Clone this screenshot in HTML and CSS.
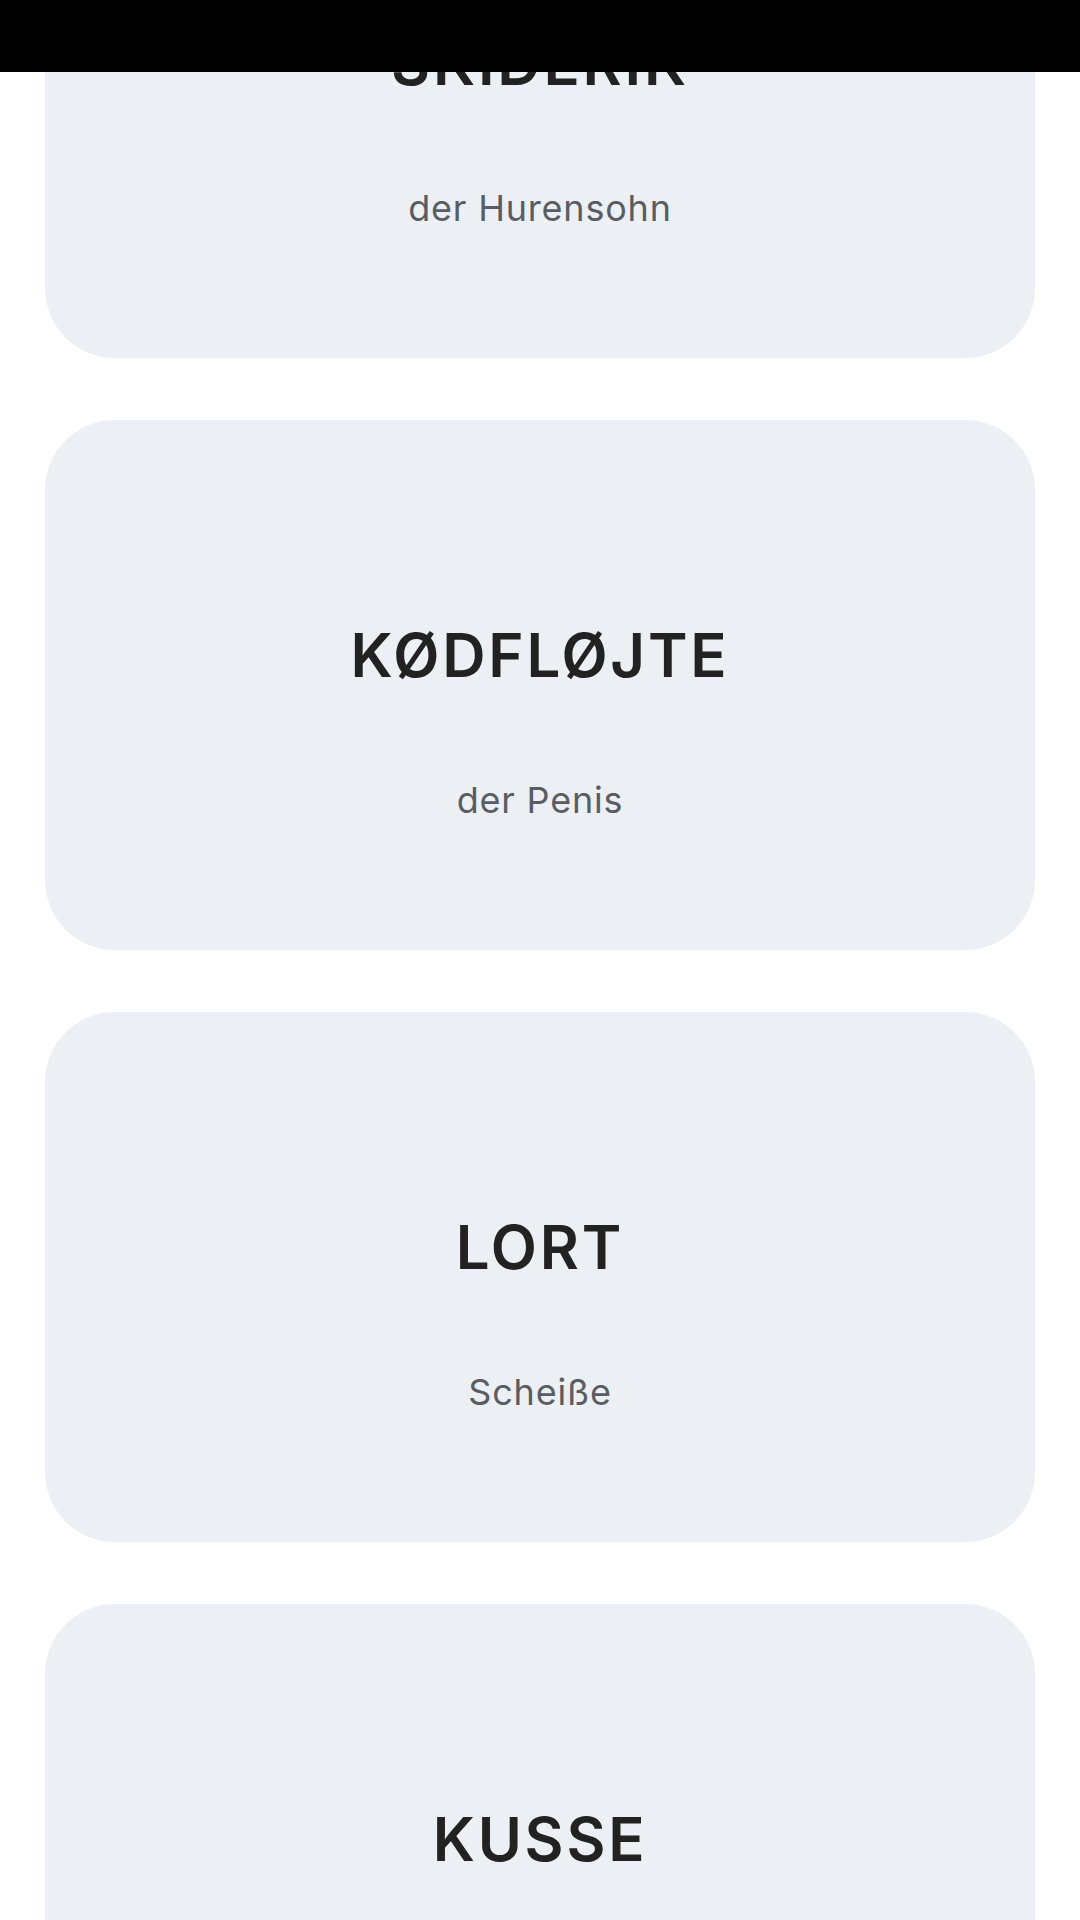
FILE: index.html
```html
<!DOCTYPE html>
<html>
  <head>
    <title>Danske bandeord</title>
    <meta charset="UTF-8"/>
    <link rel="stylesheet" href="styles.css">
  </head>
  <body>
    <div id="topbar"></div>
    <div class="cards">
      <div class="card">
        <h2>SKIDERIK</h2>
        <p>der Hurensohn</p>
      </div>
      <div class="card">
        <h2>KØDFLØJTE</h2>
        <p>der Penis</p>
      </div>
      <div class="card">
        <h2>LORT</h2>
        <p>Scheiße</p>
      </div>
      <div class="card">
        <h2>KUSSE</h2>
        <p>die Muschi</p>
      </div>
    </div>
  </body>
</html>
```

FILE: styles.css
```css
body {
  margin: 0;
  background: #fff;
  font-family: Inter, 'Open Sans', sans-serif;
  color: #222;
}
#topbar {
  position: fixed;
  top: 0;
  left: 0;
  right: 0;
  height: 72px;
  background: #000;
  z-index: 10;
}
.cards {
  display: flex;
  flex-direction: column;
  gap: 62px;
  padding: 0 45px 60px;
  margin-top: -172px;
}
.card {
  height: 530px;
  box-sizing: border-box;
  padding-top: 205px;
  border-radius: 70px;
  background: #ECF0F4;
  text-align: center;
}
.card h2 {
  margin: 0;
  font-size: 60px;
  line-height: 1;
  font-weight: 600;
  letter-spacing: 2.8px;
  color: #222;
}
.card p {
  margin: 97px 0 0;
  font-size: 36px;
  line-height: 1;
  font-weight: 400;
  letter-spacing: 0.8px;
  color: #595d63;
}
```
